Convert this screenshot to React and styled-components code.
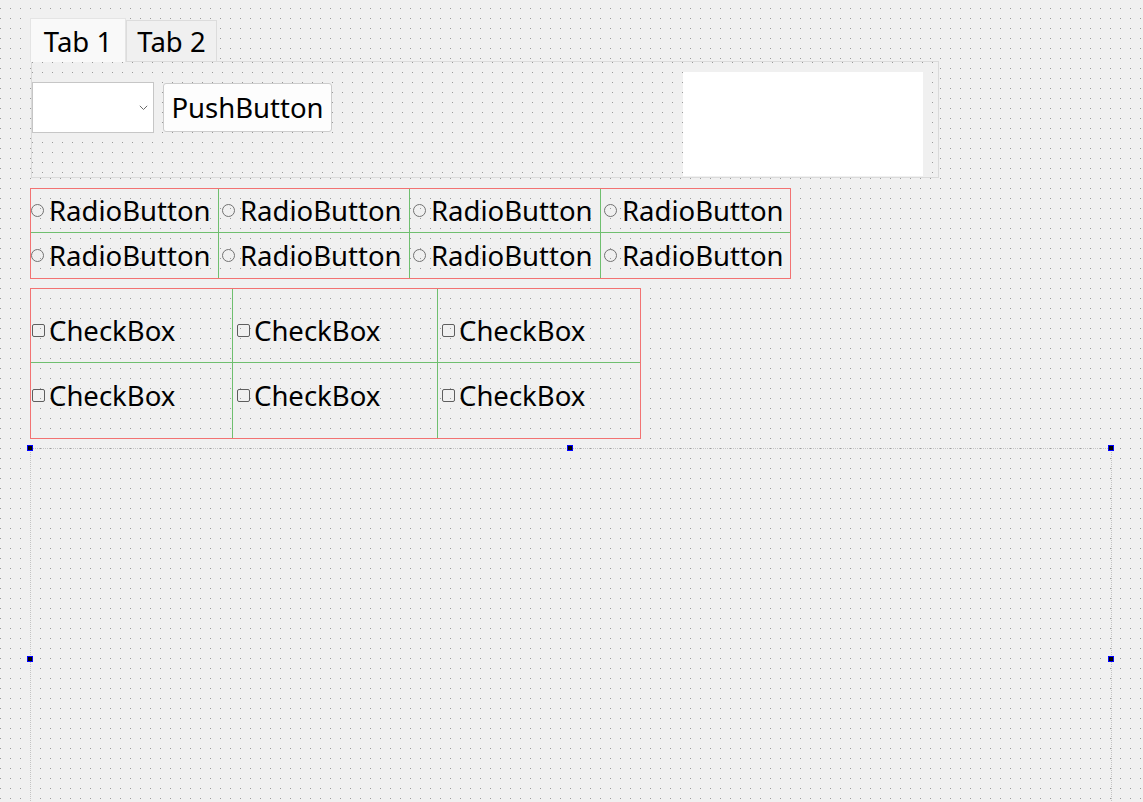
import React from 'react';
import styled, { createGlobalStyle } from 'styled-components';

const FONT = `"Noto Sans", "Open Sans", sans-serif`;
const BG = '#f0f0f0';
const DOT = '#9a9a9a';
const RED = '#f27272';
const GREEN = '#6fbf6f';

const dots = `
  background-color: ${BG};
  background-image:
    linear-gradient(to right, transparent 1px, ${BG} 1px),
    linear-gradient(to bottom, ${DOT} 1px, ${BG} 1px);
  background-size: 10px 10px;
`;

const Global = createGlobalStyle`
  html, body {
    margin: 0;
    padding: 0;
    height: 100%;
    overflow: hidden;
  }
  body {
    ${dots}
    background-position: 0 8px;
    font-family: ${FONT};
    color: #000;
  }
  #root { height: 100%; overflow: hidden; }
`;

const Form = styled.div`
  display: flex;
  flex-direction: column;
  align-items: flex-start;
  padding: 18px 0 0 30px;
  box-sizing: border-box;
  height: 100%;
  overflow: hidden;
`;

const TabWidget = styled.div`
  display: flex;
  flex-direction: column;
  width: 909px;
  flex: none;
`;

const TabBar = styled.div`
  display: flex;
  align-items: flex-end;
  height: 43px;
`;

const Tab = styled.div`
  box-sizing: border-box;
  display: flex;
  align-items: center;
  justify-content: center;
  width: ${(p) => p.$w}px;
  height: ${(p) => (p.$active ? 44 : 41)}px;
  margin-bottom: ${(p) => (p.$active ? -1 : 0)}px;
  position: relative;
  z-index: ${(p) => (p.$active ? 1 : 0)};
  background: ${(p) => (p.$active ? '#f9f9f9' : '#f0f0f0')};
  border: 1px solid ${(p) => (p.$active ? '#e4e4e4' : '#dcdcdc')};
  border-bottom: none;
  font-size: 27.5px;
  line-height: 1;
  padding-top: ${(p) => (p.$active ? 2 : 1)}px;
  white-space: nowrap;
`;

const Pane = styled.div`
  box-sizing: border-box;
  margin-left: 1px;
  width: 908px;
  height: 117px;
  border: 1px solid #dadada;
  ${dots}
  background-position: 0 0;
  display: flex;
  align-items: flex-start;
`;

const Controls = styled.div`
  display: flex;
  align-items: center;
  gap: 9px;
  margin-top: 20px;
`;

const Combo = styled.div`
  box-sizing: border-box;
  width: 122px;
  height: 51px;
  background: #ffffff;
  border: 1px solid #c6c6c6;
  display: flex;
  align-items: center;
  justify-content: flex-end;
  padding-right: 5px;
  padding-top: 1px;
`;

const PushButton = styled.div`
  box-sizing: border-box;
  width: 169px;
  height: 49px;
  background: #fdfdfd;
  border: 1px solid #cccccc;
  border-radius: 3px;
  display: flex;
  align-items: center;
  justify-content: center;
  font-size: 27.5px;
  white-space: nowrap;
`;

const WhiteBox = styled.div`
  margin-left: auto;
  margin-right: 15px;
  margin-top: 10px;
  width: 240px;
  height: 104px;
  background: #ffffff;
`;

const Grid = styled.div`
  box-sizing: border-box;
  display: grid;
  flex: none;
  grid-template-columns: ${(p) => p.$cols};
  grid-template-rows: ${(p) => p.$rows};
  width: ${(p) => p.$w}px;
  height: ${(p) => p.$h}px;
  margin-top: ${(p) => p.$mt}px;
  border: 1px solid ${RED};
`;

const Cell = styled.div`
  box-sizing: border-box;
  display: flex;
  align-items: center;
  padding-left: ${(p) => p.$pad}px;
  padding-top: ${(p) => p.$pt || 0}px;
  padding-bottom: ${(p) => p.$pb || 0}px;
  border-right: ${(p) => (p.$lastCol ? 'none' : `1px solid ${GREEN}`)};
  border-bottom: ${(p) => (p.$lastRow ? 'none' : `1px solid ${GREEN}`)};
`;

const RadioDot = styled.span`
  box-sizing: border-box;
  width: 13px;
  height: 13px;
  border: 1px solid #727272;
  border-radius: 50%;
  flex: none;
`;

const CheckSquare = styled.span`
  box-sizing: border-box;
  width: 13px;
  height: 13px;
  border: 1px solid #5e5e5e;
  border-radius: 2px;
  flex: none;
`;

const Label = styled.span`
  font-size: 27.5px;
  line-height: 1.36;
  margin-left: ${(p) => p.$gap}px;
  white-space: nowrap;
`;

const Selected = styled.div`
  box-sizing: border-box;
  position: relative;
  flex: none;
  margin-top: 9px;
  width: 1082px;
  height: 421px;
  border: 1px dotted #c4c4c4;
`;

const Handle = styled.span`
  position: absolute;
  box-sizing: border-box;
  width: 6px;
  height: 6px;
  border: 1px solid #0000ff;
  background: #000;
  left: ${(p) => p.$l};
  top: ${(p) => p.$t};
`;

const Chevron = () => (
  <svg width="9" height="6" viewBox="0 0 9 6">
    <polyline points="0.8,0.8 4.5,4.5 8.2,0.8" fill="none" stroke="#6a6a6a" strokeWidth="1" />
  </svg>
);

const radioCols = [188, 191, 191, 189];
const checkCols = [202, 205, 202];

export default function App() {
  return (
    <>
      <Global />
      <Form>
        <TabWidget>
          <TabBar>
            <Tab $active $w={96}>Tab 1</Tab>
            <Tab $w={91}>Tab 2</Tab>
          </TabBar>
          <Pane>
            <Controls>
              <Combo>
                <Chevron />
              </Combo>
              <PushButton>PushButton</PushButton>
            </Controls>
            <WhiteBox />
          </Pane>
        </TabWidget>

        <Grid
          $cols={radioCols.map((c) => c + 'px').join(' ')}
          $rows="44px 45px"
          $w={761}
          $h={91}
          $mt={10}
        >
          {[0, 1].map((r) =>
            radioCols.map((_, c) => (
              <Cell
                key={`r${r}${c}`}
                $pad={c === 0 ? 0 : 3}
                $lastCol={c === radioCols.length - 1}
                $lastRow={r === 1}
              >
                <RadioDot />
                <Label $gap={5}>RadioButton</Label>
              </Cell>
            ))
          )}
        </Grid>

        <Grid
          $cols={checkCols.map((c) => c + 'px').join(' ')}
          $rows="74px 75px"
          $w={611}
          $h={151}
          $mt={9}
        >
          {[0, 1].map((r) =>
            checkCols.map((_, c) => (
              <Cell
                key={`c${r}${c}`}
                $pad={c === 0 ? 1 : 4}
                $pt={r === 0 ? 10 : 0}
                $pb={r === 1 ? 10 : 0}
                $lastCol={c === checkCols.length - 1}
                $lastRow={r === 1}
              >
                <CheckSquare />
                <Label $gap={4}>CheckBox</Label>
              </Cell>
            ))
          )}
        </Grid>

        <Selected>
          <Handle $l="-4px" $t="-4px" />
          <Handle $l="calc(50% - 4px)" $t="-4px" />
          <Handle $l="calc(100% - 3px)" $t="-4px" />
          <Handle $l="-4px" $t="calc(50% - 3px)" />
          <Handle $l="calc(100% - 3px)" $t="calc(50% - 3px)" />
        </Selected>
      </Form>
    </>
  );
}
